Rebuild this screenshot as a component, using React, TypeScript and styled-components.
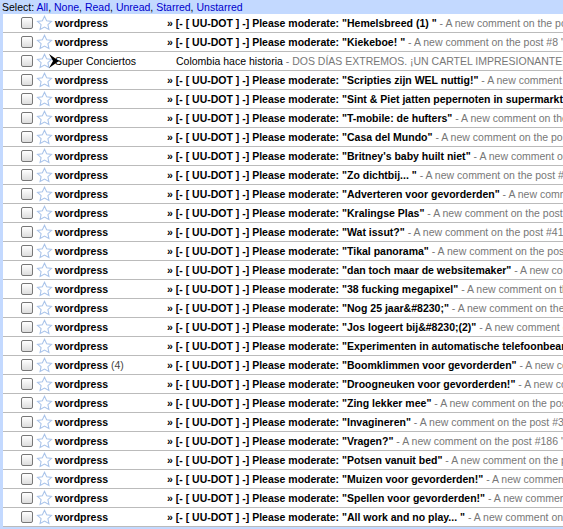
import React from "react";
import styled, { createGlobalStyle } from "styled-components";

const G = createGlobalStyle`
  body { margin: 0; font-family: "Liberation Sans", Arial, sans-serif; font-size: 10.5px; background: #fff; overflow: hidden; }
`;
const Wrap = styled.div`width: 563px; height: 529px; overflow: hidden; background: #c3d9ff;`;
const Bar = styled.div`height: 14px; line-height: 14px; padding-left: 2px; font-size: 10.5px; color: #000;
  a { color: #0000cc; text-decoration: none; }`;
const List = styled.div`margin-left: 3px; background: #fff;`;
const Row = styled.div`display: flex; align-items: center; height: 18px; border-bottom: 1px solid #bbb; white-space: nowrap; overflow: hidden; color: #000;`;
const Box = styled.span`flex: none; width: 10px; height: 10px; margin-left: 18px; border: 1px solid #777; border-radius: 2px;
  background: linear-gradient(#fff, #ddd);`;
const Star = styled.svg`flex: none; margin-left: 3px; width: 17px; height: 17px;`;
const Sender = styled.span<{ $b: boolean }>`flex: none; width: 112px; padding-left: 2px; font-weight: ${p => p.$b ? "bold" : "normal"}; overflow: hidden;
  span { font-weight: normal; color: #444; }`;
const Subj = styled.span<{ $b: boolean }>`font-weight: ${p => p.$b ? "bold" : "normal"}; padding-left: ${p => p.$b ? "0" : "9px"};`;
const Snip = styled.span`font-weight: normal; color: #777;`;
const Cursor = styled.svg`position: absolute; left: 48px; top: 53px;`;

const rows: [string, string][] = [
  ["Hemelsbreed (1) ", "A new comment on the post #4 \"Hemelsbreed\""],
  ["Kiekeboe! ", "A new comment on the post #8 \"Kiekeboe!\" is waiting"],
  ["", ""],
  ["Scripties zijn WEL nuttig!", "A new comment on the post #12"],
  ["Sint & Piet jatten pepernoten in supermarkt", "A new comment on the post"],
  ["T-mobile: de hufters", "A new comment on the post #161 \"T-mobile\""],
  ["Casa del Mundo", "A new comment on the post #294 \"Casa del Mundo\""],
  ["Britney's baby huilt niet", "A new comment on the post #91"],
  ["Zo dichtbij... ", "A new comment on the post #26 \"Zo dichtbij\""],
  ["Adverteren voor gevorderden", "A new comment on the post #117"],
  ["Kralingse Plas", "A new comment on the post #418 \"Kralingse Plas\""],
  ["Wat issut?", "A new comment on the post #415 \"Wat issut?\""],
  ["Tikal panorama", "A new comment on the post #303 \"Tikal panorama\""],
  ["dan toch maar de websitemaker", "A new comment on the post"],
  ["38 fucking megapixel", "A new comment on the post #401"],
  ["Nog 25 jaar&#8230;", "A new comment on the post #258 \"Nog\""],
  ["Jos logeert bij&#8230;(2)", "A new comment on the post #122"],
  ["Experimenten in automatische telefoonbeantwoording", "A new comment"],
  ["Boomklimmen voor gevorderden", "A new comment on the post #88"],
  ["Droogneuken voor gevorderden!", "A new comment on the post #77"],
  ["Zing lekker mee", "A new comment on the post #245 \"Zing lekker mee\""],
  ["Invagineren", "A new comment on the post #375 \"Invagineren\""],
  ["Vragen?", "A new comment on the post #186 \"Vragen?\" is waiting"],
  ["Potsen vanuit bed", "A new comment on the post #351 \"Potsen\""],
  ["Muizen voor gevorderden!", "A new comment on the post #60"],
  ["Spellen voor gevorderden!", "A new comment on the post #59"],
  ["All work and no play... ", "A new comment on the post #63"],
];

const StarIcon = () => (
  <Star viewBox="0 0 16 16"><path d="M8 1.2l2 4.3 4.6.5-3.4 3.1 1 4.6L8 11.4l-4.2 2.3 1-4.6L1.4 6l4.6-.5z" fill="#fff" stroke="#aac4ea" strokeWidth="1" /></Star>
);

export default function App() {
  return (
    <Wrap>
      <G />
      <Bar>Select: <a>All</a>, <a>None</a>, <a>Read</a>, <a>Unread</a>, <a>Starred</a>, <a>Unstarred</a></Bar>
      <List>
        {rows.map(([t, s], i) => (
          <Row key={i}>
            <Box /><StarIcon />
            {i === 2 ? (
              <>
                <Sender $b={false}>Super Conciertos</Sender>
                <Subj $b={false}>Colombia hace historia <Snip>- DOS DÍAS EXTREMOS. ¡UN CARTEL IMPRESIONANTE! (Tomado de</Snip></Subj>
              </>
            ) : (
              <>
                <Sender $b={true}>wordpress{i === 18 && <span> (4)</span>}</Sender>
                <Subj $b={true}>» [- [ UU-DOT ] -] Please moderate: "{t}" <Snip>- {s}</Snip></Subj>
              </>
            )}
          </Row>
        ))}
      </List>
      <Cursor width="12" height="16" viewBox="0 0 12 16"><path d="M1 1l10 7-10 7 4-7z" fill="#000" /></Cursor>
    </Wrap>
  );
}
